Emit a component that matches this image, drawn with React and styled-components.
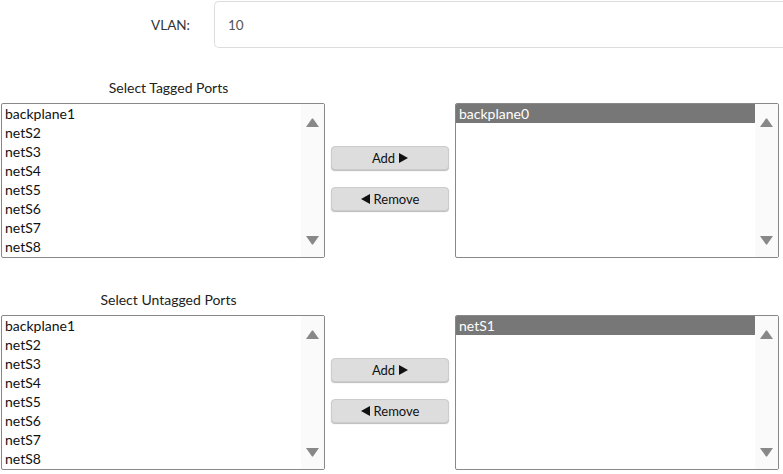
import React from "react";
import styled, { createGlobalStyle } from "styled-components";

const Global = createGlobalStyle`
  body {
    margin: 0;
    background: #fff;
    font-family: "Lato", "Liberation Sans", sans-serif;
    color: #222;
  }
`;

const Page = styled.div`
  width: 783px;
  height: 474px;
  overflow: hidden;
`;

const FieldRow = styled.div`
  display: grid;
  grid-template-columns: 190px 1fr;
  column-gap: 24px;
  align-items: center;
  padding-top: 1px;
`;

const Label = styled.label`
  text-align: right;
  font-size: 13.5px;
  color: #333;
`;

const TextInput = styled.div`
  height: 45px;
  border: 1px solid #ddd;
  border-right: none;
  border-radius: 5px 0 0 5px;
  display: flex;
  align-items: center;
  padding-left: 13px;
  font-size: 13.5px;
  color: #555;
`;

const Section = styled.section`
  margin-top: ${(p) => p.top}px;
`;

const SectionTitle = styled.div`
  width: 337px;
  text-align: center;
  font-size: 14px;
  height: 17px;
  line-height: 17px;
  margin-bottom: 7px;
`;

const PickerRow = styled.div`
  display: flex;
  align-items: center;
  padding-left: 1px;
`;

const ListBox = styled.div`
  width: 324px;
  height: 155px;
  box-sizing: border-box;
  border: 1px solid #888;
  border-radius: 2px;
  display: flex;
  background: #fff;
  overflow: hidden;
`;

const Items = styled.ul`
  flex: 1;
  list-style: none;
  margin: 0;
  padding: 0;
`;

const Item = styled.li`
  height: 19px;
  line-height: 19px;
  padding-left: 3px;
  font-size: 14px;
  background: ${(p) => (p.selected ? "#777" : "transparent")};
  color: ${(p) => (p.selected ? "#fff" : "#111")};
`;

const ScrollBar = styled.div`
  width: 23px;
  background: #fafafa;
  display: flex;
  flex-direction: column;
  justify-content: space-between;
  align-items: center;
  padding: 14px 0 12px;
`;

const Controls = styled.div`
  width: 130px;
  display: flex;
  flex-direction: column;
  align-items: center;
  gap: 17px;
  margin-top: -5px;
`;

const Button = styled.button`
  width: 118px;
  height: 24px;
  border: 1px solid #ccc;
  border-radius: 4px;
  background: #ddd;
  box-shadow: 0 1px 1px #bbb;
  font-family: inherit;
  font-size: 13px;
  color: #111;
  display: flex;
  align-items: center;
  justify-content: center;
  gap: 4px;
  padding: 0;
`;

const Arrow = ({ down }) => (
  <svg width="15" height="10" viewBox="0 0 15 10">
    <path d={down ? "M1 1 L14 1 L8 9.5 L7 9.5 Z" : "M1 9 L14 9 L8 0.5 L7 0.5 Z"} fill="#888" />
  </svg>
);

const Tri = ({ left }) => (
  <svg width="9" height="10" viewBox="0 0 9 10">
    <path d={left ? "M9 0 L9 10 L0 5 Z" : "M0 0 L0 10 L9 5 Z"} fill="#111" />
  </svg>
);

const PortList = ({ ports, selected }) => (
  <ListBox>
    <Items>
      {ports.map((p) => (
        <Item key={p} selected={p === selected}>
          {p}
        </Item>
      ))}
    </Items>
    <ScrollBar>
      <Arrow />
      <Arrow down />
    </ScrollBar>
  </ListBox>
);

const available = ["backplane1", "netS2", "netS3", "netS4", "netS5", "netS6", "netS7", "netS8"];

const PortPicker = ({ title, chosen, top }) => (
  <Section top={top}>
    <SectionTitle>{title}</SectionTitle>
    <PickerRow>
      <PortList ports={available} />
      <Controls>
        <Button>
          Add <Tri />
        </Button>
        <Button>
          <Tri left /> Remove
        </Button>
      </Controls>
      <PortList ports={[chosen]} selected={chosen} />
    </PickerRow>
  </Section>
);

const App = () => {
  return (
    <Page>
      <Global />
      <FieldRow>
        <Label>VLAN:</Label>
        <TextInput>10</TextInput>
      </FieldRow>
      <PortPicker title="Select Tagged Ports" chosen="backplane0" top={31} />
      <PortPicker title="Select Untagged Ports" chosen="netS1" top={33} />
    </Page>
  );
};

export default App;
